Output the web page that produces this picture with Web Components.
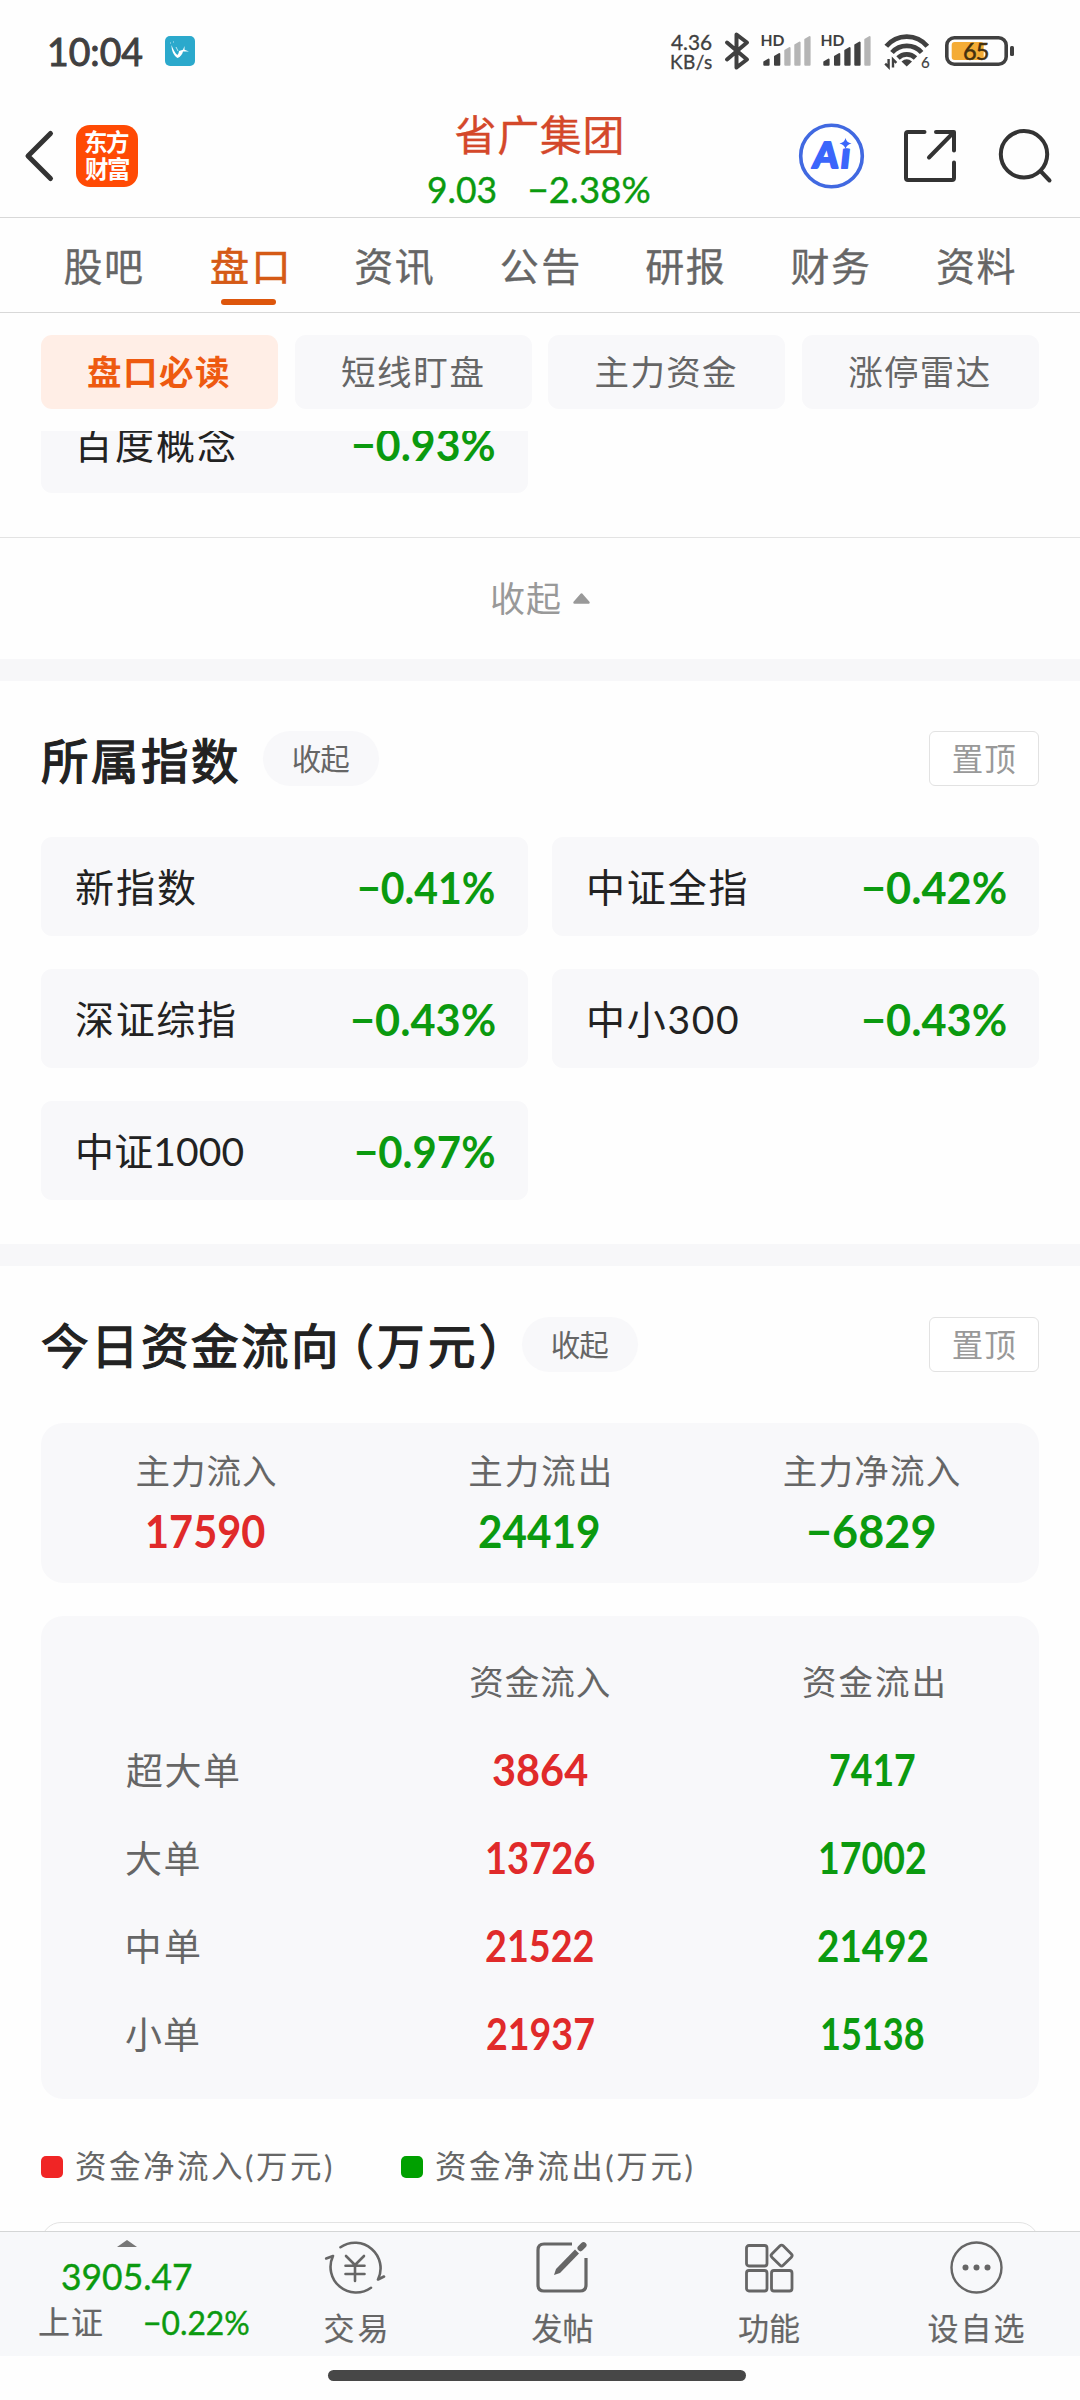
<!DOCTYPE html>
<html lang="zh-CN">
<head>
<meta charset="utf-8">
<title>省广集团 盘口</title>
<style>
html, body { margin: 0; background: #fefefe; }
body {
  --up: #e02a2a; --down: #0b9a0f; --card: #f8f8fa; --ink: #222; --mid: #666; --soft: #999;
  font-family: Lato, "Noto Sans CJK SC", sans-serif; color: var(--ink);
}
</style>
</head>
<body>
<stock-page></stock-page>
<script>
const define = (name, css, render) => customElements.define(name, class extends HTMLElement {
  connectedCallback() {
    if (this.shadowRoot) return;
    this.attachShadow({ mode: 'open' }).innerHTML =
      `<style>*{box-sizing:border-box}:host{box-sizing:border-box}svg{display:block;flex:none;overflow:visible}${css}</style>${render(this)}`;
  }
});

/* A single-line label whose ink spans exactly `w` pixels; `s` is the font size, `b` the weight, `k` an optional stroke.
   Numbers that are too wide are condensed, other texts are tracked. */
const pen = document.createElement('canvas').getContext('2d');
customElements.define('fit-text', class extends HTMLElement {
  connectedCallback() {
    if (this.shadowRoot) return;
    const s = +this.getAttribute('s'), w = +this.getAttribute('w');
    const b = this.getAttribute('b') || 400, k = this.getAttribute('k') || 0;
    const text = this.textContent;
    pen.font = `${b} ${s}px Lato, "Noto Sans CJK SC", sans-serif`;
    const m = pen.measureText(text);
    const natural = m.actualBoundingBoxLeft + m.actualBoundingBoxRight;
    const condense = /^[\d.−%:]+$/.test(text) && natural > w;
    const sx = condense ? w / natural : 1;
    const ls = condense ? 0 : (w - natural) / Math.max(1, text.length - 1);
    this.attachShadow({ mode: 'open' }).innerHTML = `<style>
      :host{display:block;flex:none;width:${w}px;height:${s}px;line-height:${s}px;font-size:${s}px;font-weight:${b};
      white-space:nowrap;letter-spacing:${ls}px;-webkit-text-stroke:${k}px currentColor}
      span{display:block;width:max-content;margin-left:${m.actualBoundingBoxLeft * sx}px;transform:scaleX(${sx});transform-origin:0 50%}
      </style><span><slot></slot></span>`;
  }
});

const bars = [[2.3, 24.5], [13, 19], [23.3, 13], [33.3, 7.5], [43.3, 2]];
define('signal-bars', `:host{display:block;width:50px;height:34px}`, el => `
  <svg width="50" height="34" viewBox="0 0 50 34">
    <text x="-.5" y="12" font-size="15.5" font-weight="700" fill="#404040" textLength="24" lengthAdjust="spacingAndGlyphs">HD</text>
    ${bars.map(([x, y], i) => `<path d="M${x + 1} ${y + 3.6}L${x + 5.3} ${y + 1}V30.7H${x + 1}Z" stroke-width="2" stroke-linejoin="round"
      fill="${i < el.getAttribute('n') ? '#404040' : '#b5b5b5'}" stroke="${i < el.getAttribute('n') ? '#404040' : '#b5b5b5'}"/>`).join('')}
  </svg>`);

define('status-bar', `
  :host{display:flex;align-items:center;height:102px;padding:0 66px 0 50px;color:#404040}
  .app{margin-left:23px} .sp{flex:1}
  .speed{display:flex;flex-direction:column;margin-right:13px}
  .bt{margin-right:12px} .s1{margin-right:10px} .s2{margin-right:13px} .wifi{margin-right:15px}`, () => `
  <fit-text s="38" w="92" k="1">10:04</fit-text>
  <svg class="app" width="30" height="30" viewBox="0 0 30 30"><rect width="30" height="30" rx="5" fill="#2ba9cc"/>
    <path d="M6.500 9c0 6 2 10.500 6 13c3-1 5-4 5.500-6.500h6l-4.500-1.700v-3.800l-1.500 3.800-4 1.200c-.2 2-.8 3-1.700 4C10 17 8 13 6.500 9Z" fill="#fff"/>
    <path d="M11 11l2 4M8 6h1M5 7h1" stroke="#dff4fa" stroke-width=".8"/></svg>
  <span class="sp"></span>
  <div class="speed"><fit-text s="21" w="41" k=".3">4.36</fit-text><fit-text s="19" w="41" k=".3">KB/s</fit-text></div>
  <svg class="bt" width="24" height="38" viewBox="0 0 24 38"><path d="M2 10.500 L22 27.500 L11.500 35.500 V2.500 L22 10.500 L2 27.500" fill="none" stroke="#404040" stroke-width="4" stroke-linejoin="round" stroke-linecap="round"/></svg>
  <signal-bars class="s1" n="2"></signal-bars><signal-bars class="s2" n="4"></signal-bars>
  <svg class="wifi" width="46" height="34" viewBox="0 0 46 34">
    <g fill="none" stroke="#404040" stroke-width="4.800"><path d="M2.300 12.300A26.400 26.400 0 0 1 43.300 12.300"/><path d="M8 18.500A20 20 0 0 1 37.600 18.500"/><path d="M14 24A12.500 12.500 0 0 1 31.500 24"/></g>
    <path d="M17.500 27.500Q22.700 23 28 27.500L22.700 32.500Z" fill="#404040"/>
    <path d="M4.600 25V33L1.200 29.600M9 33.500V25.500l3.400 3.400" fill="none" stroke="#404040" stroke-width="2.400"/>
    <text x="37" y="33.500" font-size="15" fill="#404040" stroke="#404040" stroke-width=".2">6</text></svg>
  <svg width="69" height="30" viewBox="0 0 69 30"><rect x="1.800" y="1.800" width="59.400" height="26.400" rx="7.500" fill="none" stroke="#404040" stroke-width="3.600"/>
    <rect x="6.700" y="6" width="32" height="18" rx="3" fill="#f4ac36"/><rect x="65" y="10" width="4" height="10" rx="1.500" fill="#404040"/>
    <text x="18" y="23.500" font-size="23.500" textLength="26.500" fill="#44300f" stroke="#44300f" stroke-width=".5">65</text></svg>`);

define('brand-logo', `:host{display:flex;flex-direction:column;align-items:center;justify-content:center;gap:3px;width:62px;height:62px;border-radius:14px;background:#ff4a04;color:#fff}`, () => `
  <fit-text s="23.500" w="44" b="700">东方</fit-text><fit-text s="23.500" w="44" b="700">财富</fit-text>`);

define('stock-header', `
  :host{display:grid;grid-template-columns:1fr auto 1fr;height:116px;padding:0 28px 0 25px;border-bottom:1px solid #d8d8d8}
  .l,.r{display:flex;align-items:center;padding-bottom:7px} .l{gap:23px} .r{justify-content:flex-end}
  .r svg+svg{margin-left:40px} .r svg+svg+svg{margin-left:43px}
  .m{display:flex;flex-direction:column;align-items:center;padding-top:12px;width:224px}
  .m>fit-text{color:#d4482a} .q{display:flex;gap:34px;color:var(--down);margin-top:15px}`, () => `
  <div class="l"><svg width="28" height="50" viewBox="0 0 28 50"><path d="M25.500 2.500L3 25L25.500 47.500" fill="none" stroke="#333" stroke-width="5" stroke-linecap="round" stroke-linejoin="round"/></svg><brand-logo></brand-logo></div>
  <div class="m"><fit-text s="42" w="166" k=".3">省广集团</fit-text>
    <div class="q"><fit-text s="36.500" w="68" k=".4">9.03</fit-text><fit-text s="36.500" w="120" k=".4">−2.38%</fit-text></div></div>
  <div class="r">
    <svg width="65" height="66" viewBox="0 0 65 66"><circle cx="32.500" cy="33" r="30.800" fill="#fff" stroke="#4169e1" stroke-width="3.600"/>
      <g transform="translate(13 44.500) skewX(-6)" fill="#3b66fb" stroke="#3b66fb" stroke-width="2" stroke-linejoin="round"><text font-size="36" font-weight="900" textLength="37" lengthAdjust="spacing">Ai</text></g>
      <path d="M38.500 14H54V25H40Z" fill="#fff"/><path d="M46.500 15Q47.500 19.500 52.500 20.500Q47.500 21.500 46.500 26Q45.500 21.500 40.500 20.500Q45.500 19.500 46.500 15Z" fill="#3b66fb"/></svg>
    <svg width="52" height="52" viewBox="0 0 52 52"><path d="M20.500 2H4Q2 2 2 4V48Q2 50 4 50H48Q50 50 50 48V32.500M32 2H50V20.500M49.500 2.500L25 27.500" fill="none" stroke="#333" stroke-width="4" stroke-linecap="round" stroke-linejoin="round"/></svg>
    <svg width="53" height="54" viewBox="0 0 53 54"><g fill="none" stroke="#333" stroke-width="4" stroke-linecap="round"><circle cx="25" cy="25.300" r="23.200"/><path d="M41.500 42L50.500 51.500"/></g></svg>
  </div>`);

const tabs = ['股吧', '盘口', '资讯', '公告', '研报', '财务', '资料'];
define('tab-bar', `
  :host{display:grid;grid-template-columns:repeat(7,1fr);height:95px;padding:0 31.500px 0 30.500px;border-bottom:1px solid #d8d8d8;color:var(--mid)}
  div{display:flex;flex-direction:column;align-items:center;padding-top:29px}
  .on{color:#d55a16} .on::after{content:"";width:55px;height:6px;border-radius:3px;background:#dd560c;margin-top:13px}`, () =>
  tabs.map((t, i) => `<div class="${i === 1 ? 'on' : ''}"><fit-text s="39" w="${i === 1 ? 75.5 : 77.5}" k="${i === 1 ? .7 : .3}">${t}</fit-text></div>`).join(''));

define('segment-row', `
  :host{display:grid;grid-template-columns:repeat(4,1fr);gap:16.500px;height:118px;padding:22px 41px 0}
  div{display:flex;align-items:center;justify-content:center;height:74px;padding-right:2px;border-radius:11px;background:var(--card);color:var(--mid)}
  .on{background:#ffeee6;color:#ee5a10}`, () => `
  <div class="on"><fit-text s="34.500" w="141" b="700">盘口必读</fit-text></div><div><fit-text s="34.500" w="140.500">短线盯盘</fit-text></div>
  <div><fit-text s="34.500" w="140.500">主力资金</fit-text></div><div><fit-text s="34.500" w="140.500">涨停雷达</fit-text></div>`);

define('quote-card', `
  :host{display:flex;align-items:center;justify-content:space-between;height:99px;padding:2px 34px 0 35px;border-radius:11px;background:var(--card)}
  .v{color:var(--down)}`, el => `
  <fit-text s="39" w="${el.getAttribute('nw')}" style="margin-left:${el.getAttribute('dx') || 0}px">${el.getAttribute('name')}</fit-text>
  <fit-text class="v" s="43.500" b="700" w="${el.getAttribute('vw')}">${el.getAttribute('value')}</fit-text>`);

define('card-grid', `:host{display:grid;grid-template-columns:1fr 1fr;gap:33px 24px;padding:0 41px}`, () => `<slot></slot>`);

define('section-head', `
  :host{display:flex;align-items:center;height:55px;padding:0 41px 0 42px}
  ::slotted(*){padding-top:2px}
  .fold{display:flex;align-items:center;justify-content:center;width:116px;height:55px;border-radius:28px;background:var(--card);color:var(--mid)}
  .sp{flex:1} .top{display:flex;align-items:center;justify-content:center;width:110px;height:55px;padding-top:2px;border:1px solid #e2e2e2;border-radius:6px;background:#fff;color:var(--soft)}`, () => `
  <slot></slot><div class="fold"><fit-text s="29.500" w="56.500">收起</fit-text></div><span class="sp"></span>
  <div class="top"><fit-text s="31.500" w="62.500">置顶</fit-text></div>`);

define('fold-row', `:host{display:flex;align-items:center;justify-content:center;gap:13px;height:122px;padding-left:2px;border-top:1px solid #e3e3e3;color:var(--soft)}`, () => `
  <fit-text s="35" w="68">收起</fit-text><svg width="17" height="11" viewBox="0 0 17 11"><path d="M1.500 9.500L8.500 1.500L15.500 9.500Z" fill="#999" stroke="#999" stroke-width="2.500" stroke-linejoin="round"/></svg>`);

define('section-band', `:host{display:block;height:22px;background:#f7f7f9}`, () => '');

define('flow-summary', `
  :host{display:grid;grid-template-columns:repeat(3,1fr);height:160px;margin:0 41px;border-radius:22px;background:var(--card);color:var(--mid)}
  div{display:flex;flex-direction:column;align-items:center;padding:31px 2px 0 0;gap:19px}
  .u{color:var(--up)} .d{color:var(--down)}`, () => `
  <div><fit-text s="34.500" w="139.500">主力流入</fit-text><fit-text class="u" s="46" b="700" w="117">17590</fit-text></div>
  <div><fit-text s="34.500" w="139.500">主力流出</fit-text><fit-text class="d" s="46" b="700" w="120">24419</fit-text></div>
  <div><fit-text s="34.500" w="176">主力净流入</fit-text><fit-text class="d" s="46" b="700" w="126">−6829</fit-text></div>`);

const rows = [['超大单', 113, '3864', 95, '7417', 84, 0], ['大单', 73.5, '13726', 107.5, '17002', 106, 0], ['中单', 72.5, '21522', 107.5, '21492', 110, 1.5], ['小单', 73, '21937', 107, '15138', 102, 0]];
define('flow-table', `
  :host{display:block;height:483px;margin:0 41px;padding-top:22px;border-radius:22px;background:var(--card);color:var(--mid)}
  div{display:grid;grid-template-columns:repeat(3,1fr);align-items:center;justify-items:center;height:88px}
  .n{justify-self:start} .h{padding-right:2px} .u{color:var(--up)} .d{color:var(--down)}`, () => `
  <div><span></span><fit-text class="h" s="34.500" w="139.500">资金流入</fit-text><fit-text class="h" s="34.500" w="139.500">资金流出</fit-text></div>
  ${rows.map(r => `<div><fit-text class="n" s="37" w="${r[1]}" style="margin-left:${85 + r[6]}px">${r[0]}</fit-text><fit-text class="u" s="43.500" b="700" w="${r[3]}">${r[2]}</fit-text><fit-text class="d" s="43.500" b="700" w="${r[5]}">${r[4]}</fit-text></div>`).join('')}`);

define('flow-legend', `
  :host{display:flex;align-items:center;height:34px;padding-left:41px;color:var(--mid)}
  i{width:22px;height:22px;border-radius:5px;margin-right:13px;background:#f02525} fit-text+i{background:#00a000;margin-left:70px}`, () => `
  <i></i><fit-text s="31.500" w="255">资金净流入(万元)</fit-text><i></i><fit-text s="31.500" w="255.500">资金净流出(万元)</fit-text>`);

define('page-body', `
  :host{display:block;height:1800px;overflow:hidden}
  .in{display:flex;flex-direction:column;margin-top:-37px}
  fold-row{margin-top:44px} section-head{margin:50px 0 51px} section-band.b{margin-top:44px}
  .t1{margin-right:25px} .t2{display:flex;margin-right:28px}
  flow-table{margin-top:33px} flow-legend{margin-top:51px}
  .next{height:60px;margin:38px 41px 0;border:1px solid #e3e3e3;border-radius:20px}`, () => `
  <div class="in">
    <card-grid><quote-card name="百度概念" nw="159" value="−0.93%" vw="141"></quote-card></card-grid>
    <fold-row></fold-row>
    <section-band></section-band>
    <section-head><fit-text class="t1" s="47.500" k="1.300" w="196">所属指数</fit-text></section-head>
    <card-grid>
      <quote-card name="新指数" nw="119" value="−0.41%" vw="135"></quote-card>
      <quote-card name="中证全指" nw="157.500" dx="2" value="−0.42%" vw="142.500"></quote-card>
      <quote-card name="深证综指" nw="159" value="−0.43%" vw="142.500"></quote-card>
      <quote-card name="中小300" nw="149" dx="2" value="−0.43%" vw="142.500"></quote-card>
      <quote-card name="中证1000" nw="165.500" dx="2" value="−0.97%" vw="138"></quote-card>
    </card-grid>
    <section-band class="b"></section-band>
    <section-head style="margin-top:51px"><span class="t2"><fit-text s="47.500" k="1.300" w="293">今日资金流向</fit-text><fit-text s="47.500" k="1.300" w="135" style="margin-left:24px">（万元）</fit-text></span></section-head>
    <flow-summary></flow-summary>
    <flow-table></flow-table>
    <flow-legend></flow-legend>
    <div class="next"></div>
  </div>`);

define('tool-item', `
  :host{display:flex;flex-direction:column;align-items:center;color:var(--mid);padding:9px 1px 0 0}
  .i{height:54px;margin-bottom:17.500px;display:flex;align-items:flex-start}`, el => `
  <div class="i"><slot></slot></div><fit-text s="31" w="${el.getAttribute('w')}" k=".2">${el.getAttribute('label')}</fit-text>`);

define('bottom-bar', `
  :host{display:grid;grid-template-columns:252px repeat(4,207px);height:125px;border-top:1px solid #d4d6d6;background:#f7f8fa}
  .q{display:flex;flex-direction:column;color:var(--down)}
  .up{margin:8px 0 10px 117px} .p{margin-left:62px} .r{display:flex;gap:43px;align-items:center;margin:11px 0 0 39px} .r :first-child{color:var(--mid)}
  g{fill:none;stroke:#666;stroke-linecap:round;stroke-linejoin:round}`, () => `
  <div class="q"><svg class="up" width="20" height="7"><path d="M0 7L10 0L20 7Z" fill="#777"/></svg>
    <fit-text class="p" s="37.500" w="130" k=".4">3905.47</fit-text>
    <div class="r"><fit-text s="32" w="63" k=".2">上证</fit-text><fit-text s="33" w="103.500" k=".4">−0.22%</fit-text></div></div>
  <tool-item label="交易" w="61"><svg width="60" height="54" viewBox="0 0 60 54"><g stroke-width="2.600"><path d="M15.500 6.200A25.600 25.600 0 0 1 53 38.500L59 35.500M46 46.800A25.600 25.600 0 0 1 8 15L1.200 17.500"/><path d="M21 15L30 24L39 15M30 24V40M20.500 24.800H39.500M20.500 33H39.500"/></g></svg></tool-item>
  <tool-item label="发帖" w="61"><svg width="52" height="52" viewBox="0 0 52 52" style="margin-top:1px"><g stroke-width="3.200"><path stroke-linecap="butt" d="M36 2H8Q2 2 2 8V43Q2 49 8 49H44Q50 49 50 43V16"/></g>
    <path d="M18 33L20 27L39 7.500L43 11.500L24 31Z" fill="#666"/><path d="M44.500 6.200L47.500 3.200" stroke="#666" stroke-width="6" stroke-linecap="round"/></svg></tool-item>
  <tool-item label="功能" w="60"><svg width="49" height="49" viewBox="0 0 49 49" style="margin-top:3px"><g stroke-width="2.800"><rect x="1.500" y="1.500" width="20.500" height="20.500" rx="2.500"/><rect x="1.500" y="26.500" width="20.500" height="20.500" rx="2.500"/><rect x="26.500" y="26.500" width="20.500" height="20.500" rx="2.500"/><rect x="28.600" y="3.600" width="16" height="16" rx="2.200" transform="rotate(45 36.600 11.600)"/></g></svg></tool-item>
  <tool-item label="设自选" w="95"><svg width="53" height="53" viewBox="0 0 53 53"><g stroke-width="2.400"><circle cx="26.500" cy="26.500" r="25"/></g><g style="fill:#666;stroke:none"><circle cx="15.500" cy="26.500" r="3"/><circle cx="26.500" cy="26.500" r="3"/><circle cx="37.500" cy="26.500" r="3"/></g></svg></tool-item>`);

define('home-indicator', `:host{display:flex;justify-content:center;height:44px;padding:14px 6px 0 0} i{width:418px;height:11px;border-radius:6px;background:#474747}`, () => `<i></i>`);

define('stock-page', `:host{display:flex;flex-direction:column;width:1080px;height:2400px;overflow:hidden;background:#fefefe}`, () => `
  <status-bar></status-bar><stock-header></stock-header><tab-bar></tab-bar><segment-row></segment-row>
  <page-body></page-body><bottom-bar></bottom-bar><home-indicator></home-indicator>`);
</script>
</body>
</html>
